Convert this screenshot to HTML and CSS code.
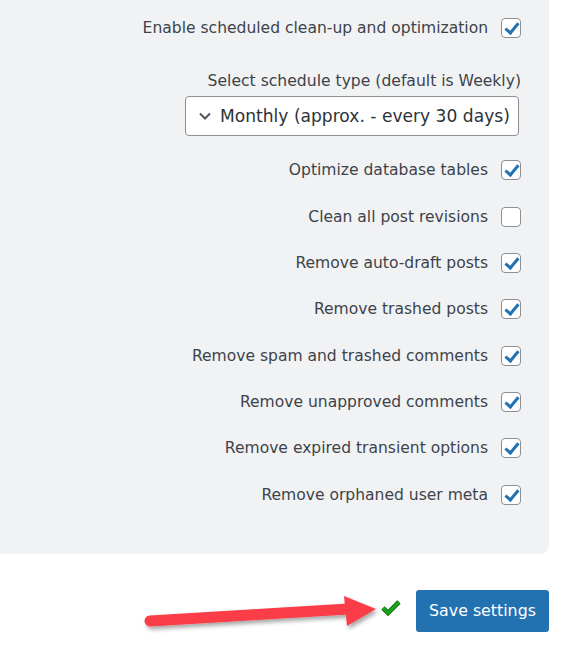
FILE: index.html
```html
<!DOCTYPE html>
<html>
<head>
<meta charset="utf-8">
<link rel="stylesheet" href="styles.css">
</head>
<body>
<div class="panel">
  <label class="row"><span>Enable scheduled clean-up and optimization</span><span class="cb on"></span></label>
  <div class="sched">
    <div class="sched-label">Select schedule type (default is Weekly)</div>
    <div class="select">
      <svg class="chev" width="14" height="10" viewBox="0 0 14 10"><path d="M2 2.5 L7 7.5 L12 2.5" fill="none" stroke="#50575e" stroke-width="2"/></svg>
      <span>Monthly (approx. - every 30 days)</span>
    </div>
  </div>
  <label class="row"><span>Optimize database tables</span><span class="cb on"></span></label>
  <label class="row"><span>Clean all post revisions</span><span class="cb"></span></label>
  <label class="row"><span>Remove auto-draft posts</span><span class="cb on"></span></label>
  <label class="row"><span>Remove trashed posts</span><span class="cb on"></span></label>
  <label class="row"><span>Remove spam and trashed comments</span><span class="cb on"></span></label>
  <label class="row"><span>Remove unapproved comments</span><span class="cb on"></span></label>
  <label class="row"><span>Remove expired transient options</span><span class="cb on"></span></label>
  <label class="row"><span>Remove orphaned user meta</span><span class="cb on"></span></label>
</div>
<div class="footer">
  <svg class="ok" width="22" height="18" viewBox="0 0 22 18"><path d="M3 9 L8 14 L19 3" fill="none" stroke="#0e6b0e" stroke-width="4.6"/><path d="M3 9 L8 14 L19 3" fill="none" stroke="#1aa51a" stroke-width="3"/></svg>
  <button class="save">Save settings</button>
</div>
<svg class="arrow" width="582" height="658" viewBox="0 0 582 658">
  <defs>
    <filter id="sh" x="-10%" y="-50%" width="120%" height="200%">
      <feDropShadow dx="2" dy="3" stdDeviation="2" flood-color="#000" flood-opacity="0.35"/>
    </filter>
  </defs>
  <g filter="url(#sh)" fill="#fa3c46">
    <path d="M150 621 L348 609" stroke="#fa3c46" stroke-width="11" stroke-linecap="round"/>
    <path d="M344 596 L376 609 L347 626 Z"/>
  </g>
</svg>
</body>
</html>
```
FILE: styles.css
```css
html, body { margin: 0; padding: 0; background: #fff; }
body {
  font-family: "DejaVu Sans", Verdana, sans-serif;
  color: #3c434a;
  width: 582px;
  height: 658px;
  position: relative;
  overflow: hidden;
}
.panel {
  width: 549px;
  box-sizing: border-box;
  background: #f1f2f4;
  border-radius: 0 0 9px 0;
  padding: 5px 28px 36px 0;
  display: flex;
  flex-direction: column;
  align-items: flex-end;
}
.row {
  height: 46.3px;
  display: flex;
  align-items: center;
  justify-content: flex-end;
  gap: 13px;
  font-size: 15.55px;
}
.cb {
  width: 18px;
  height: 18px;
  border: 1px solid #8c8f94;
  border-radius: 4px;
  background: #fff;
  position: relative;
  flex: none;
}
.cb.on::after {
  content: "";
  position: absolute;
  left: 6px;
  top: 1px;
  width: 5px;
  height: 11px;
  border: solid #2271b1;
  border-width: 0 3px 3px 0;
  transform: rotate(40deg);
}
.sched {
  display: flex;
  flex-direction: column;
  align-items: flex-end;
  margin-top: 20px;
  margin-bottom: 11px;
}
.sched-label {
  font-size: 15.6px;
  line-height: 20px;
  margin-bottom: 5px;
}
.select {
  width: 334px;
  height: 40px;
  box-sizing: border-box;
  border: 1px solid #8c8f94;
  border-radius: 4px;
  background: #fff;
  display: flex;
  align-items: center;
  gap: 8px;
  padding-left: 12px;
  font-size: 17.1px;
  color: #2c3338;
  margin-right: 2px;
}
.footer {
  width: 549px;
  display: flex;
  justify-content: flex-end;
  align-items: center;
  margin-top: 36px;
  gap: 14px;
}
.ok { margin-top: -6px; }
.save {
  width: 133px;
  height: 42px;
  border: 0;
  border-radius: 3px;
  background: #2271b1;
  color: #fff;
  font-family: "DejaVu Sans", Verdana, sans-serif;
  font-size: 15.8px;
  padding: 0;
}
.arrow { position: absolute; left: 0; top: 0; pointer-events: none; }
```
